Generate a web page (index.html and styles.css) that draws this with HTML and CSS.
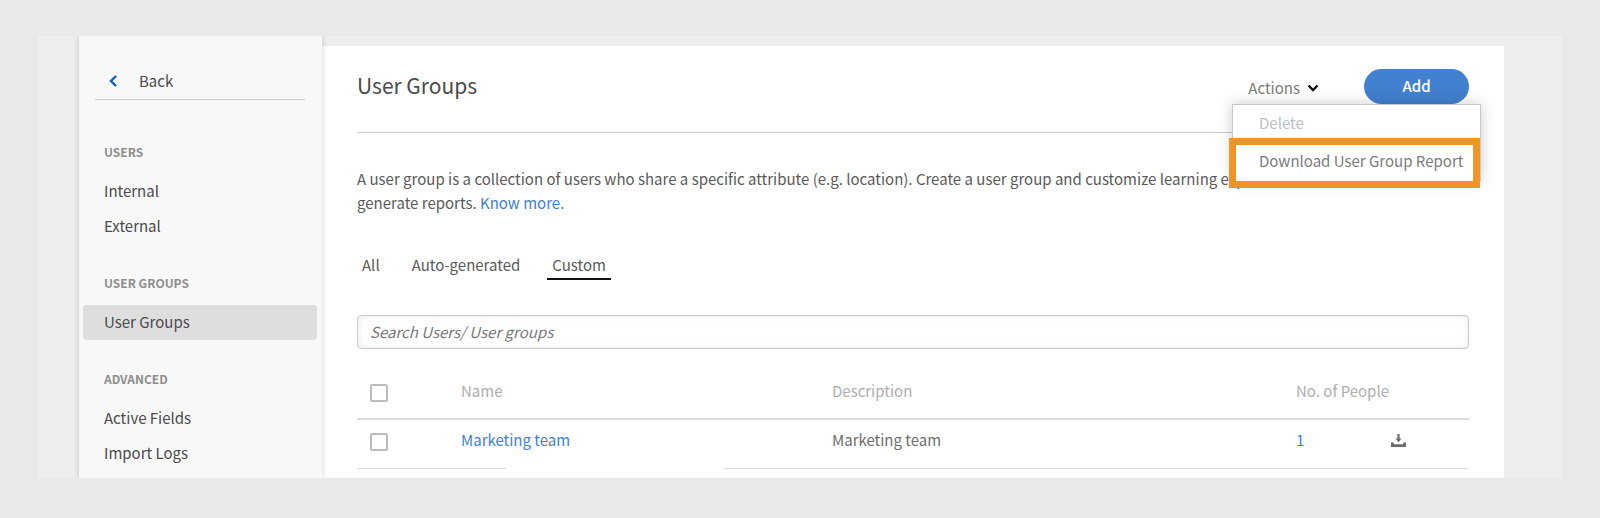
FILE: index.html
```html
<!DOCTYPE html>
<html lang="en">
<head>
<meta charset="utf-8">
<title>User Groups</title>
<link rel="stylesheet" href="styles.css">
</head>
<body>
<div class="frame">
  <nav class="sidebar">
    <a class="back" href="#">
      <svg class="back-icon" viewBox="0 0 8 12" aria-hidden="true"><path d="M7 1 2 6l5 5"/></svg>
      <span>Back</span>
    </a>
    <section class="nav-group">
      <h2 class="nav-title">USERS</h2>
      <a class="nav-link" href="#">Internal</a>
      <a class="nav-link" href="#">External</a>
    </section>
    <section class="nav-group">
      <h2 class="nav-title">USER GROUPS</h2>
      <a class="nav-link active" href="#">User Groups</a>
    </section>
    <section class="nav-group">
      <h2 class="nav-title">ADVANCED</h2>
      <a class="nav-link" href="#">Active Fields</a>
      <a class="nav-link" href="#">Import Logs</a>
    </section>
  </nav>
  <main class="main">
    <header class="header">
      <h1 class="title">User Groups</h1>
      <div class="header-actions">
        <button class="actions" type="button">Actions
          <svg class="chevron" viewBox="0 0 12 8" aria-hidden="true"><path d="m1.5 1.5 4.5 4.5 4.5-4.5"/></svg>
        </button>
        <button class="add" type="button">Add</button>
        <div class="menu">
          <button class="menu-item" type="button" disabled>Delete</button>
          <button class="menu-item highlighted" type="button">Download User Group Report</button>
        </div>
      </div>
    </header>
    <p class="intro">A user group is a collection of users who share a specific attribute (e.g. location). Create a user group and customize learning experiences and<br>generate reports. <a class="link" href="#">Know more.</a></p>
    <nav class="tabs">
      <a class="tab" href="#">All</a>
      <a class="tab" href="#">Auto-generated</a>
      <a class="tab current" href="#">Custom</a>
    </nav>
    <input class="search" type="text" placeholder="Search Users/ User groups" aria-label="Search Users/ User groups">
    <div class="table-wrap">
      <table class="groups">
        <thead>
          <tr>
            <th class="col-check"><input class="check" type="checkbox" aria-label="Select all"></th>
            <th class="col-name">Name</th>
            <th class="col-desc">Description</th>
            <th class="col-people">No. of People</th>
            <th class="col-icon"></th>
          </tr>
        </thead>
        <tbody>
          <tr>
            <td class="col-check"><input class="check" type="checkbox" aria-label="Select Marketing team"></td>
            <td><a class="link" href="#">Marketing team</a></td>
            <td>Marketing team</td>
            <td><a class="link" href="#">1</a></td>
            <td>
              <button class="download" type="button" aria-label="Download">
                <svg viewBox="0 0 15 13" aria-hidden="true"><path d="M6.4 0h2.2v4.6h1.9L7.5 8.2l-3-3.6h1.9zM0 8.6h2.8v1.6h9.4V8.6H15V13H0z"/></svg>
              </button>
            </td>
          </tr>
        </tbody>
      </table>
      <div class="mask"></div>
    </div>
  </main>
</div>
</body>
</html>
```

FILE: styles.css
```css
* { box-sizing: border-box; }

body {
  margin: 0;
  padding: 36px 38px 40px;
  background: #e9e9e9;
  color: #5a5a5a;
  font: 15px/24px "Noto Sans CJK SC", "Noto Sans", sans-serif;
}

button, input { font: inherit; color: inherit; }
button { padding: 0; border: 0; background: none; cursor: pointer; }
a { color: inherit; text-decoration: none; }

.frame {
  display: flex;
  padding: 0 58px 0 41px;
  background: #eee;
  overflow: hidden;
}

.sidebar {
  position: relative;
  z-index: 1;
  flex: 0 0 243px;
  padding-bottom: 5px;
  background: #f8f8f8;
  box-shadow: 0 0 6px rgba(0, 0, 0, 0.2);
  color: #4b4b4b;
}

.back {
  display: flex;
  align-items: center;
  gap: 22px;
  height: 64px;
  margin: 0 17px 13px 16px;
  padding: 26px 0 0 14px;
  border-bottom: 1px solid #ccc;
}

.back-icon {
  width: 8px;
  height: 12px;
  fill: none;
  stroke: #1158d0;
  stroke-width: 2.4;
}

.nav-group { padding: 29px 5px 0 4px; }

.nav-title {
  margin: 0 0 12px 21px;
  color: #8e8e8e;
  font-size: 12px;
  font-weight: 700;
  line-height: 20px;
}

.nav-link {
  display: block;
  height: 35px;
  padding-left: 21px;
  border-radius: 4px;
  line-height: 34px;
}

.nav-link.active { background: #dedede; }

.main {
  flex: 1;
  min-width: 0;
  margin-top: 10px;
  padding: 23px 35px 9px;
  background: #fff;
}

.header {
  display: flex;
  justify-content: space-between;
  align-items: flex-start;
  height: 64px;
  border-bottom: 1px solid #ccc;
}

.title {
  margin: 0;
  color: #4b4b4b;
  font-size: 21px;
  font-weight: 400;
  line-height: 33px;
}

.header-actions {
  position: relative;
  display: flex;
  align-items: center;
  gap: 45px;
  color: #7b7b7b;
}

.actions {
  display: flex;
  align-items: center;
  gap: 7px;
  padding-top: 2px;
}

.chevron {
  width: 12px;
  height: 8px;
  fill: none;
  stroke: #111;
  stroke-width: 2.4;
}

.add {
  width: 105px;
  height: 35px;
  padding-bottom: 2px;
  border-radius: 18px;
  background: #4281d0;
  color: #fff;
  font-weight: 500;
}

.menu {
  position: absolute;
  z-index: 2;
  top: 100%;
  right: -12px;
  width: 249px;
  border: 1px solid #c8c8c8;
  background: #fff;
  box-shadow: 0 0 14px rgba(0, 0, 0, 0.2);
}

.menu-item {
  position: relative;
  display: block;
  width: 100%;
  height: 38px;
  padding: 0 0 2px 26px;
  text-align: left;
  white-space: nowrap;
}

.menu-item:disabled { color: #c0c0c0; }

.menu-item.highlighted::after {
  content: "";
  position: absolute;
  inset: -5px 0 -7px -4px;
  border: 7px solid #f29423;
}

.intro { margin: 34px 0 0; }
.link { color: #3f7fd4; }

.tabs {
  display: flex;
  gap: 22px;
  margin-top: 38px;
}

.tab {
  padding: 0 5px 1px;
  border-bottom: 2px solid transparent;
}

.tab.current { border-color: #111; }

.search {
  display: block;
  width: 100%;
  height: 34px;
  margin: 35px 0 22px;
  padding: 0 12px 2px;
  border: 1px solid #ccc;
  border-radius: 4px;
  background: #fff;
  box-shadow: inset 0 0 6px rgba(0, 0, 0, 0.1);
}

.search::placeholder {
  color: #777;
  font-style: italic;
  opacity: 1;
}

.table-wrap { position: relative; }

.groups {
  width: 100%;
  border-collapse: collapse;
  table-layout: fixed;
  color: #6e6e6e;
}

.groups th, .groups td {
  height: 49px;
  padding: 0 0 7px;
  border-bottom: 1px solid #dcdcdc;
  font-weight: 400;
  text-align: left;
  white-space: nowrap;
}

.groups th {
  height: 48px;
  border-bottom: 2px solid #dcdcdc;
  color: #aeaeae;
}

.groups .col-check {
  width: 104px;
  padding: 0 0 4px 13px;
}

.col-desc { width: 464px; }
.col-people { width: 95px; }
.col-icon { width: 78px; }

.check {
  display: block;
  width: 18px;
  height: 18px;
  margin: 0;
  appearance: none;
  border: 2px solid #bbb;
  border-radius: 2px;
  background: #fff;
}

.download {
  display: block;
  width: 15px;
  height: 13px;
}

.download svg {
  display: block;
  fill: #6b6b6b;
}

/* Blank patch over the lower rule of the last row */
.mask {
  position: absolute;
  bottom: -9px;
  left: 149px;
  width: 217px;
  height: 14px;
  background: #fff;
}
```
